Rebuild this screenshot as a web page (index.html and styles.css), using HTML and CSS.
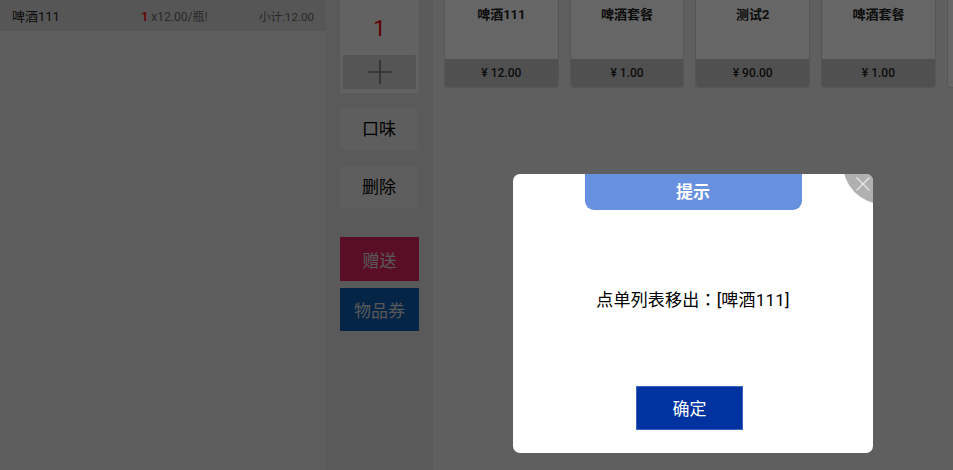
FILE: index.html
```html
<!DOCTYPE html>
<html lang="zh">
<head>
<meta charset="utf-8">
<title>提示</title>
<link rel="stylesheet" href="styles.css">
</head>
<body>
<div class="app">
  <section class="order">
    <div class="order-row">
      <span class="order-name">啤酒111</span>
      <span class="order-qty"><b>1</b> x12.00/瓶!</span>
      <span class="order-sub">小计:12.00</span>
    </div>
  </section>
  <aside class="actions">
    <div class="stepper">
      <div class="stepper-value">1</div>
      <button class="stepper-plus" type="button" aria-label="增加">
        <svg width="24" height="24" viewBox="0 0 24 24"><path d="M0 12H24M12 0V24" stroke="#777" stroke-width="1.6" fill="none"/></svg>
      </button>
    </div>
    <button class="action" type="button">口味</button>
    <button class="action" type="button">删除</button>
    <button class="promo promo-gift" type="button">赠送</button>
    <button class="promo promo-coupon" type="button">物品券</button>
  </aside>
  <main class="products">
    <article class="card"><h3 class="card-name">啤酒111</h3><div class="card-price">¥ 12.00</div></article>
    <article class="card"><h3 class="card-name">啤酒套餐</h3><div class="card-price">¥ 1.00</div></article>
    <article class="card"><h3 class="card-name">测试2</h3><div class="card-price">¥ 90.00</div></article>
    <article class="card"><h3 class="card-name">啤酒套餐</h3><div class="card-price">¥ 1.00</div></article>
    <article class="card"></article>
  </main>
</div>
<div class="overlay"></div>
<div class="dialog" role="dialog">
  <div class="dialog-close">
    <svg class="dialog-x" width="14" height="14" viewBox="0 0 14 14"><path d="M0.5 0.5L13.5 13.5M13.5 0.5L0.5 13.5" stroke="#e4e4e4" stroke-width="1.4" fill="none"/></svg>
  </div>
  <div class="dialog-title">提示</div>
  <p class="dialog-msg" lang="zh-TW">点单列表移出：[啤酒111]</p>
  <button class="dialog-ok" type="button">确定</button>
</div>
</body>
</html>
```
FILE: styles.css
```css
* { box-sizing: border-box; }
html, body { margin: 0; height: 100%; }
body {
  width: 953px;
  height: 470px;
  overflow: hidden;
  position: relative;
  background: #eee;
  font-family: Roboto, "Noto Sans CJK SC", sans-serif;
  color: #000;
}
button { font-family: inherit; border: 0; padding: 0; }

.app { display: flex; height: 470px; }

.order { width: 325px; flex: none; background: #e8e8e8; }
.order-row {
  height: 31px;
  background: #d8d8d8;
  display: flex;
  align-items: center;
  padding: 0 11px 0 12px;
  font-size: 12px;
  color: #666;
}
.order-name { font-size: 13px; color: #222; width: 129px; }
.order-qty { flex: 1; }
.order-qty b { font-weight: 500; font-size: 13px; color: #f00; }
.order-sub { font-size: 11.6px; }

.actions {
  width: 108px;
  flex: none;
  background: #e2e2e2;
  padding-left: 15px;
  display: flex;
  flex-direction: column;
}
.stepper {
  width: 79px;
  height: 93px;
  background: #f5f5f5;
  padding: 0 3px 4px;
  display: flex;
  flex-direction: column;
}
.stepper-value {
  height: 55px;
  padding-top: 1px;
  display: flex;
  align-items: center;
  justify-content: center;
  font-size: 22px;
  color: #e00;
}
.stepper-plus {
  flex: 1;
  background: #d5d5d5;
  border-radius: 2px;
  display: flex;
  align-items: center;
  justify-content: center;
}
.action {
  width: 78px;
  height: 42px;
  margin-top: 15px;
  padding-bottom: 3px;
  background: #ebebeb;
  border: 1px solid #e6e6e6;
  border-radius: 4px;
  font-size: 17px;
  color: #000;
}
.action + .action { margin-top: 16px; }
.promo {
  width: 79px;
  height: 43px;
  font-size: 17px;
  color: #ddd;
}
.promo-gift { margin-top: 29px; background: #e0245c; height: 44px; }
.promo-coupon { margin-top: 7px; background: #0b5cb0; }

.products {
  flex: 1;
  min-width: 0;
  background: #eee;
  padding-left: 11px;
  display: flex;
  align-items: flex-start;
  gap: 11px;
  overflow: hidden;
}
.card {
  width: 114.7px;
  flex: none;
  height: 88px;
  background: #fff;
  border: 1px solid #d8d8d8;
  border-top: 0;
  border-radius: 0 0 4px 4px;
  display: flex;
  flex-direction: column;
  justify-content: space-between;
  overflow: hidden;
}
.card-name {
  margin: 6px 0 0;
  text-align: center;
  font-size: 13px;
  line-height: 18px;
  font-weight: 700;
  color: #222;
}
.card-price {
  height: 28px;
  background: #c9c9c9;
  display: flex;
  align-items: center;
  justify-content: center;
  font-size: 12px;
  font-weight: 500;
  color: #222;
}

.overlay {
  position: absolute;
  inset: 0;
  background: rgba(0, 0, 0, 0.6);
}
.dialog {
  position: absolute;
  left: 513px;
  top: 174px;
  width: 360px;
  height: 279px;
  background: #fff;
  border-radius: 7px;
  overflow: hidden;
  display: flex;
  flex-direction: column;
  align-items: center;
}
.dialog-close {
  position: absolute;
  left: 330px;
  top: -50px;
  width: 80px;
  height: 80px;
  border-radius: 50%;
  background: #b0b0b0;
}
.dialog-x { position: absolute; left: 13px; top: 53px; }
.dialog-title {
  width: 217px;
  height: 36px;
  flex: none;
  background: #6790de;
  border-radius: 0 0 9px 9px;
  color: #fff;
  font-size: 17px;
  font-weight: 700;
  line-height: 37px;
  text-align: center;
}
.dialog-msg {
  margin: 78px 0 0;
  font-family: Roboto, "Noto Sans CJK TC", sans-serif;
  font-size: 17px;
  line-height: 24px;
  letter-spacing: 0.2px;
  color: #000;
  text-align: center;
}
.dialog-ok {
  width: 107px;
  height: 44px;
  margin-top: 74px;
  margin-right: 7px;
  padding-bottom: 2px;
  background: #0033a0;
  border: 1px solid #3f63c0;
  color: #fff;
  font-size: 17px;
}
```
